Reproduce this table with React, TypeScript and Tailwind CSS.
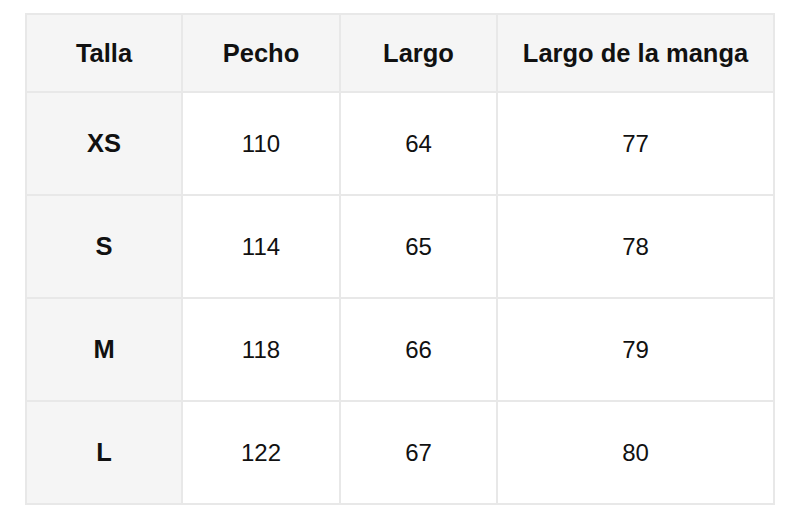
const headers = ['Talla', 'Pecho', 'Largo', 'Largo de la manga']

const rows = [
  ['XS', '110', '64', '77'],
  ['S', '114', '65', '78'],
  ['M', '118', '66', '79'],
  ['L', '122', '67', '80'],
]

export default function App() {
  return (
    <div className="w-[800px] h-[520px] bg-white pt-[13px] font-['Liberation_Sans',Arial,sans-serif] text-[#111]">
      <table className="mx-auto w-[748px] table-fixed border-collapse border-2 border-[#e8e8e8]">
        <colgroup>
          <col className="w-[156px]" />
          <col className="w-[158px]" />
          <col className="w-[157px]" />
          <col className="w-[277px]" />
        </colgroup>
        <thead>
          <tr className="h-[78px] bg-[#f5f5f5]">
            {headers.map((h) => (
              <th key={h} className="border-2 border-[#e8e8e8] text-center text-[25.5px] font-bold">
                {h}
              </th>
            ))}
          </tr>
        </thead>
        <tbody>
          {rows.map((row) => (
            <tr key={row[0]} className="h-[103px]">
              {row.map((cell, i) => (
                <td
                  key={i}
                  className={
                    i === 0
                      ? 'border-2 border-[#e8e8e8] bg-[#f5f5f5] text-center text-[25.5px] font-bold'
                      : 'border-2 border-[#e8e8e8] text-center text-[24px]'
                  }
                >
                  {cell}
                </td>
              ))}
            </tr>
          ))}
        </tbody>
      </table>
    </div>
  )
}
